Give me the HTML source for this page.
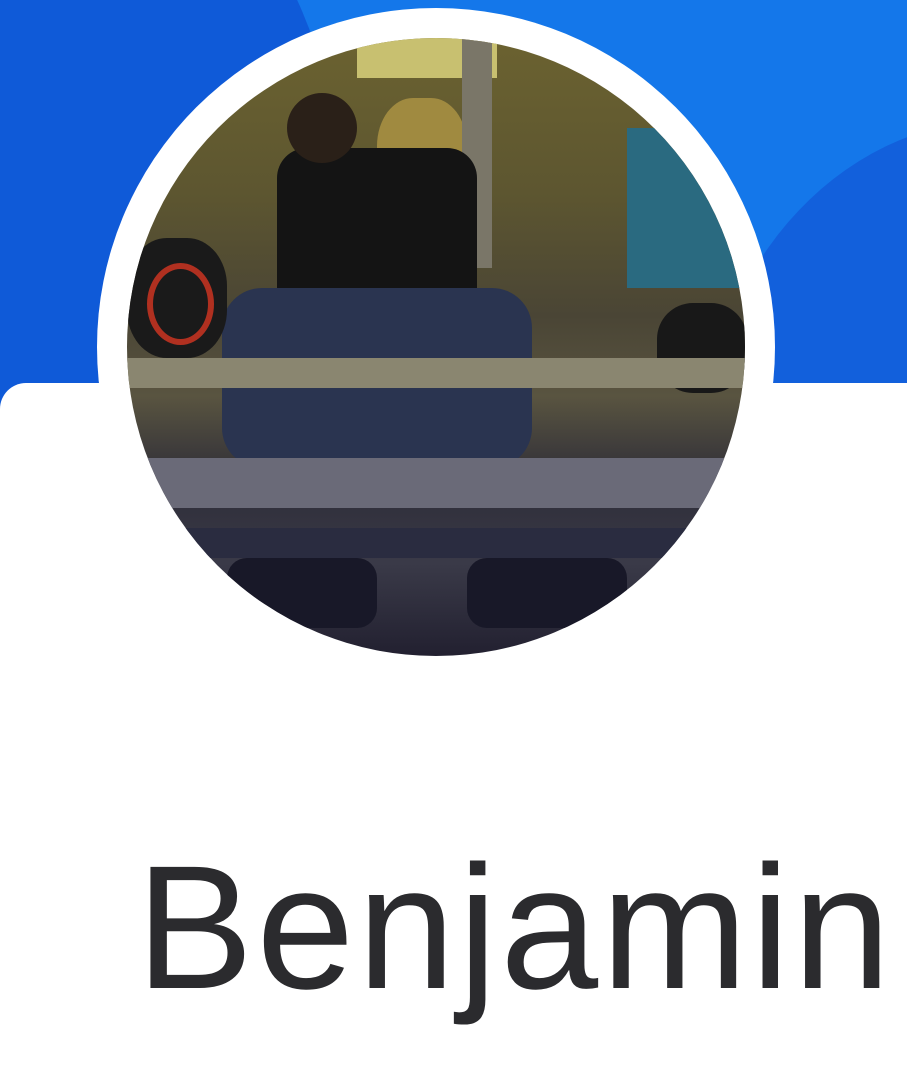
<!DOCTYPE html>
<html><head><style>
html,body{margin:0;padding:0;width:907px;height:1054px;overflow:hidden;background:#fff;}
.top{position:absolute;left:0;top:0;width:907px;height:420px;background:#1477ea;overflow:hidden;}
.sh1{position:absolute;left:-300px;top:-200px;width:640px;height:800px;border-radius:50%;background:#0f5ad8;}
.sh2{position:absolute;left:700px;top:120px;width:600px;height:700px;border-radius:50%;background:#1260dc;}
.card{position:absolute;left:0;top:383px;width:907px;height:700px;background:#fff;border-radius:26px 0 0 0;}
.ring{position:absolute;left:97px;top:8px;width:678px;height:678px;border-radius:50%;background:#fff;}
.photo{position:absolute;left:127px;top:38px;width:618px;height:618px;border-radius:50%;overflow:hidden;
background:linear-gradient(180deg,#6b6230 0%,#5d5630 25%,#4a4535 45%,#595440 58%,#2e2d38 72%,#3a3a48 85%,#222030 100%);}
.photo div{position:absolute;}
h1{position:absolute;left:136px;top:840px;margin:0;font:400 176px/1 "Liberation Sans",sans-serif;color:#2b2b2e;letter-spacing:3px;}
</style></head><body>
<div class="top"><div class="sh1"></div><div class="sh2"></div></div>
<div class="card"></div>
<div class="ring"></div>
<div class="photo">
<div style="left:230px;top:0;width:140px;height:40px;background:#c8c070;"></div>
<div style="left:250px;top:60px;width:90px;height:120px;background:#a08a40;border-radius:40%;"></div>
<div style="left:335px;top:0;width:30px;height:230px;background:#7a7668;"></div>
<div style="left:150px;top:110px;width:200px;height:170px;background:#141414;border-radius:30px 30px 0 0;"></div>
<div style="left:160px;top:55px;width:70px;height:70px;background:#2a2018;border-radius:50%;"></div>
<div style="left:95px;top:250px;width:310px;height:180px;background:#2a3450;border-radius:40px;"></div>
<div style="left:0;top:200px;width:100px;height:120px;background:#1a1a1a;border-radius:40%;"></div>
<div style="left:20px;top:225px;width:55px;height:70px;border:6px solid #b03020;border-radius:50%;"></div>
<div style="left:530px;top:265px;width:90px;height:90px;background:#181818;border-radius:40%;"></div>
<div style="left:500px;top:90px;width:118px;height:160px;background:#2a6a80;"></div>
<div style="left:0;top:320px;width:618px;height:30px;background:#8a8670;"></div>
<div style="left:0;top:420px;width:618px;height:50px;background:#6a6a78;"></div>
<div style="left:0;top:490px;width:618px;height:30px;background:#2a2c40;"></div>
<div style="left:100px;top:520px;width:150px;height:70px;background:#181828;border-radius:20px;"></div>
<div style="left:340px;top:520px;width:160px;height:70px;background:#181828;border-radius:20px;"></div>
</div>
<h1>Benjamin</h1>
</body></html>
